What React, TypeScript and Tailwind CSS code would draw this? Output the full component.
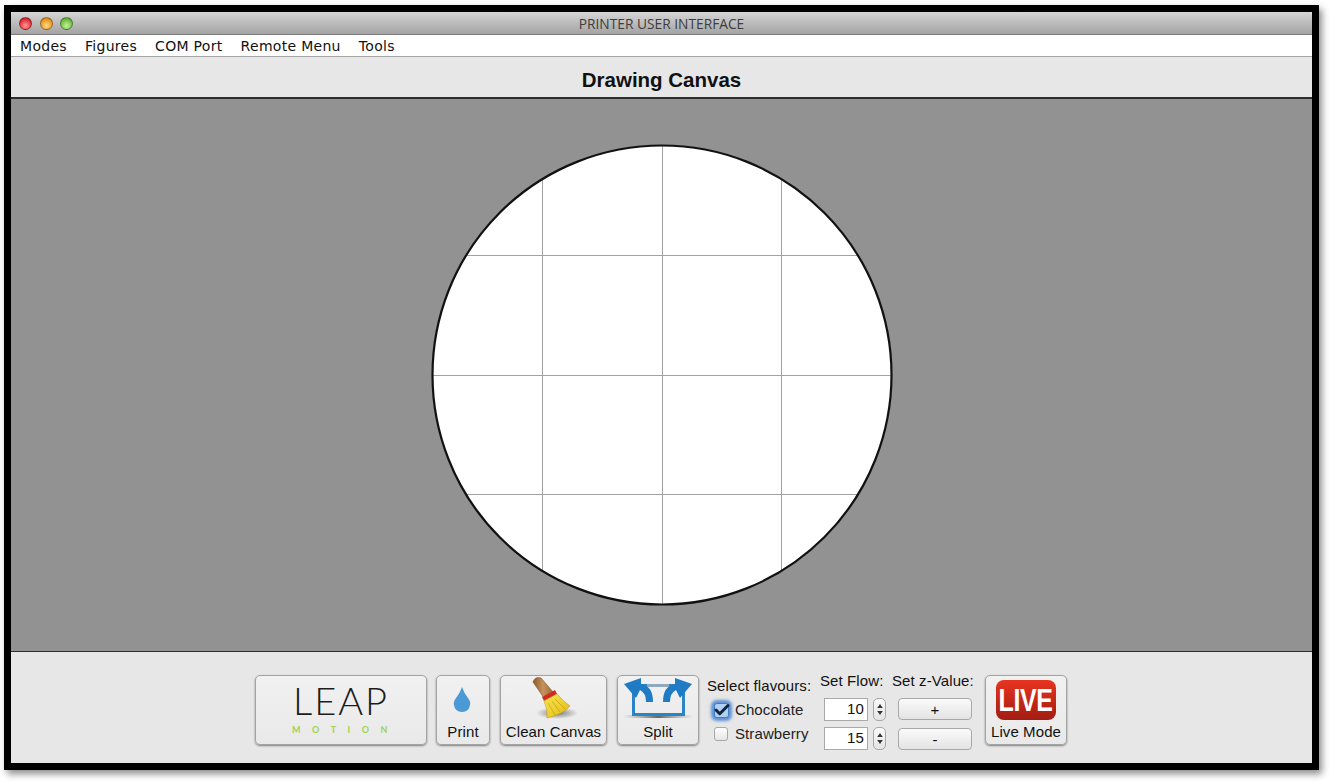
import { Check } from "lucide-react";

const menuItems = ["Modes", "Figures", "COM Port", "Remote Menu", "Tools"];

// Traffic light buttons on the title bar
function Light({ className }: { className: string }) {
  return <span className={`block h-[13px] w-[13px] rounded-full border border-[#00000055] ${className}`} />;
}

function DrawingCircle() {
  const verticals = [111, 231, 350];
  const horizontals = [111, 231, 350];
  return (
    <svg width="462" height="462" viewBox="0 0 462 462">
      <defs>
        <clipPath id="disc">
          <circle cx="231" cy="231" r="230" />
        </clipPath>
      </defs>
      <circle cx="231" cy="231" r="230" fill="#fff" />
      <g clipPath="url(#disc)" stroke="#a2a2a2" strokeWidth="1">
        {verticals.map((x) => (
          <line key={x} x1={x + 0.5} y1="0" x2={x + 0.5} y2="462" />
        ))}
        {horizontals.map((y) => (
          <line key={y} x1="0" y1={y + 0.5} x2="462" y2={y + 0.5} />
        ))}
      </g>
      <circle cx="231" cy="231" r="229.5" fill="none" stroke="#111" strokeWidth="2.2" />
    </svg>
  );
}

function ToolButton({ label, width, children }: { label?: string; width: string; children: React.ReactNode }) {
  return (
    <button
      className={`flex h-[70px] shrink-0 flex-col items-center rounded-[5px] border border-[#a3a3a3] bg-gradient-to-b from-[#f1f1f1] to-[#e9e9e9] shadow-[0_1px_2px_rgba(0,0,0,0.45)] ${width}`}
    >
      <div className="flex min-h-0 flex-1 items-center justify-center">{children}</div>
      {label && <span className="mb-[3px] whitespace-nowrap leading-[18px] text-[#111]">{label}</span>}
    </button>
  );
}

function Broom() {
  return (
    <svg width="50" height="46" viewBox="0 0 50 46" className="-mt-[1px]">
      <defs>
        <radialGradient id="broomShadow">
          <stop offset="0" stopColor="#777" />
          <stop offset="1" stopColor="#777" stopOpacity="0" />
        </radialGradient>
        <linearGradient id="bristle" x1="0" y1="0" x2="1" y2="1">
          <stop offset="0" stopColor="#fbe652" />
          <stop offset="1" stopColor="#e0ba14" />
        </linearGradient>
        <linearGradient id="handle" x1="0" y1="0" x2="1" y2="0">
          <stop offset="0" stopColor="#8a5a2a" />
          <stop offset=".5" stopColor="#c8935a" />
          <stop offset="1" stopColor="#9c6a34" />
        </linearGradient>
      </defs>
      <ellipse cx="28" cy="37" rx="21" ry="6" fill="url(#broomShadow)" />
      <path d="M4 6 Q6 0 12 2 L24 16 L15 22 Z" fill="url(#handle)" stroke="#7d5226" strokeWidth=".6" />
      <path d="M13 21 L26 14 L28 18 L15 25 Z" fill="#cf2b22" />
      <path d="M15 25 L28 18 Q34 25 41 30 Q34 38 18 42 Q19 33 15 25 Z" fill="url(#bristle)" stroke="#c49d10" strokeWidth=".6" />
      <path d="M19 27 L26 39 M23 25 L31 36 M26 23 L36 33" stroke="#c49d10" strokeWidth=".7" fill="none" />
    </svg>
  );
}

function SplitIcon() {
  return (
    <svg width="78" height="46" viewBox="0 0 78 46" className="-mt-[1px]">
      <defs>
        <linearGradient id="splitShadow" x1="0" x2="1" y1="0" y2="0">
          <stop offset="0" stopColor="#888" stopOpacity="0" />
          <stop offset=".5" stopColor="#666" />
          <stop offset="1" stopColor="#888" stopOpacity="0" />
        </linearGradient>
      </defs>
      <rect x="4" y="39" width="70" height="3" fill="url(#splitShadow)" />
      <rect x="14.5" y="9.5" width="50" height="29" fill="none" stroke="#2b84c6" strokeWidth="3" />
      <rect x="28" y="8" width="22" height="3" fill="#8fa9bd" />
      <path d="M5 8 L22 2 L22 8 Q34 10 34 26 L27 26 Q27 17 21 14 L17 22 Z" fill="#1f7cc4" />
      <path d="M73 8 L56 2 L56 8 Q44 10 44 26 L51 26 Q51 17 57 14 L61 22 Z" fill="#1f7cc4" />
    </svg>
  );
}

function Spinner() {
  return (
    <div className="flex h-[23px] w-[13px] shrink-0 flex-col items-center justify-center gap-[3px] rounded-[5px] border border-[#a8a8a8] bg-gradient-to-b from-[#fafafa] to-[#e4e4e4]">
      <svg width="6" height="4" viewBox="0 0 7 5">
        <path d="M3.5 0 L7 5 H0 Z" fill="#333" />
      </svg>
      <svg width="6" height="4" viewBox="0 0 7 5">
        <path d="M3.5 5 L7 0 H0 Z" fill="#333" />
      </svg>
    </div>
  );
}

function FlowInput({ value }: { value: string }) {
  return (
    <div className="flex items-center gap-[5px] pl-[4px]">
      <div className="flex h-[23px] w-[44px] shrink-0 items-center justify-end border border-[#a9a9a9] bg-white pr-[3px] text-[#111]">
        {value}
      </div>
      <Spinner />
    </div>
  );
}

function ZButton({ label }: { label: string }) {
  return (
    <button className="flex h-[22px] w-[74px] items-center justify-center rounded-[4px] border border-[#a8a8a8] bg-gradient-to-b from-[#fbfbfb] to-[#e3e3e3] leading-none text-[#111]">
      {label}
    </button>
  );
}

export default function App() {
  return (
    <div className="h-[783px] w-[1332px] overflow-hidden bg-white pl-[4px] pt-[5px] font-['Liberation_Sans',sans-serif]">
      <div className="flex h-[765px] w-[1315px] flex-col border-[7px] border-black bg-[#e7e7e7] shadow-[3px_4px_7px_rgba(0,0,0,0.45)]">
        {/* Title bar */}
        <div className="relative flex h-[23px] shrink-0 items-center rounded-t-[3px] border-b border-[#7c7c7c] bg-gradient-to-b from-[#d6d6d6] to-[#a3a3a3]">
          <div className="flex items-center gap-[7.5px] pl-[8px]">
            <Light className="bg-[radial-gradient(circle_at_50%_70%,#ff9a9a,#e02f35_65%,#b01d24)]" />
            <Light className="bg-[radial-gradient(circle_at_50%_70%,#ffd88a,#e8971f_65%,#b8700f)]" />
            <Light className="bg-[radial-gradient(circle_at_50%_70%,#c6f2a0,#6cbb3f_65%,#3f8f24)]" />
          </div>
          <span className="absolute inset-x-0 text-center font-['Open_Sans',sans-serif] text-[13.75px] leading-[23px] text-[#3c3c3c]">
            PRINTER USER INTERFACE
          </span>
        </div>
        {/* Menu bar */}
        <div className="flex h-[22px] shrink-0 items-center gap-[18px] border-b border-[#a5a5a5] bg-white pl-[9px] pt-[1px] font-['DejaVu_Sans',sans-serif] text-[14px] tracking-[0.3px] text-[#111]">
          {menuItems.map((item) => (
            <span key={item}>{item}</span>
          ))}
        </div>
        {/* Heading */}
        <div className="flex h-[42px] shrink-0 items-center justify-center border-b-2 border-[#2e2e2e] bg-[#e7e7e7] pt-[6px] text-[20.5px] font-bold text-[#111]">
          Drawing Canvas
        </div>
        {/* Canvas */}
        <div className="flex h-[553px] shrink-0 items-center justify-center border-b border-[#2e2e2e] bg-[#929292]">
          <DrawingCircle />
        </div>
        {/* Controls */}
        <div className="flex min-h-0 flex-1 items-start justify-center pr-[1px] pt-[23px] text-[15px] tracking-[0.1px] text-[#111]">
          <ToolButton width="w-[172px]">
            <div className="flex flex-col items-center pb-[4px]">
              <span className="font-['Lato',sans-serif] text-[38px] font-light leading-[38px] tracking-[2px] text-[#1c1c1c]">
                LEAP
              </span>
              <span className="mt-[6px] pl-[9px] font-['Lato',sans-serif] text-[9px] font-bold leading-[10px] tracking-[11.5px] text-[#9fd353]">
                MOTION
              </span>
            </div>
          </ToolButton>
          <div className="ml-[9px]">
            <ToolButton label="Print" width="w-[54px]">
              <svg width="18" height="26" viewBox="0 0 18 26" className="-ml-[2px]">
                <path d="M9 0 Q11 6 15 11 Q18 15 17 18 Q16 25 9 25 Q2 25 1 18 Q0 15 3 11 Q7 6 9 0 Z" fill="#4c9ad5" />
              </svg>
            </ToolButton>
          </div>
          <div className="ml-[10px]">
            <ToolButton label="Clean Canvas" width="w-[107px]">
              <Broom />
            </ToolButton>
          </div>
          <div className="ml-[10px]">
            <ToolButton label="Split" width="w-[82px]">
              <SplitIcon />
            </ToolButton>
          </div>
          {/* Flavours */}
          <div className="ml-[8px] flex w-[104px] shrink-0 flex-col">
            <span className="mt-[2px] whitespace-nowrap leading-[18px]">Select flavours:</span>
            <label className="mt-[6px] flex items-center gap-[6px] pl-[7px] leading-[18px]">
              <span className="flex h-[15px] w-[15px] items-center justify-center rounded-[3px] border border-[#3f7fc4] bg-[#b4d0f0] shadow-[0_0_3px_3px_rgba(70,130,210,0.85)]">
                <Check size={18} strokeWidth={4} className="shrink-0 text-[#10253f]" />
              </span>
              <span className="text-[#222]">Chocolate</span>
            </label>
            <label className="mt-[6px] flex items-center gap-[7px] pl-[7px] leading-[18px]">
              <span className="h-[14px] w-[14px] rounded-[3px] border border-[#a8a8a8] bg-gradient-to-b from-[#fdfdfd] to-[#e6e6e6]" />
              <span className="text-[#222]">Strawberry</span>
            </label>
          </div>
          {/* Flow */}
          <div className="ml-[9px] flex w-[63px] shrink-0 flex-col">
            <span className="-mt-[3px] whitespace-nowrap leading-[18px]">Set Flow:</span>
            <div className="mt-[8px] flex flex-col gap-[6px]">
              <FlowInput value="10" />
              <FlowInput value="15" />
            </div>
          </div>
          {/* z value */}
          <div className="ml-[9px] flex w-[82px] shrink-0 flex-col">
            <span className="-mt-[3px] whitespace-nowrap leading-[18px]">Set z-Value:</span>
            <div className="mt-[8px] flex flex-col gap-[8px] pl-[6px]">
              <ZButton label="+" />
              <ZButton label="-" />
            </div>
          </div>
          <div className="ml-[11px]">
            <ToolButton label="Live Mode" width="w-[82px]">
              <div className="flex h-[40px] w-[60px] items-center justify-center overflow-hidden rounded-[8px] bg-gradient-to-b from-[#e8341f] to-[#a31d13]">
                <span className="scale-x-[0.78] text-[32px] font-bold leading-none tracking-[-0.5px] text-white">LIVE</span>
              </div>
            </ToolButton>
          </div>
        </div>
      </div>
    </div>
  );
}
